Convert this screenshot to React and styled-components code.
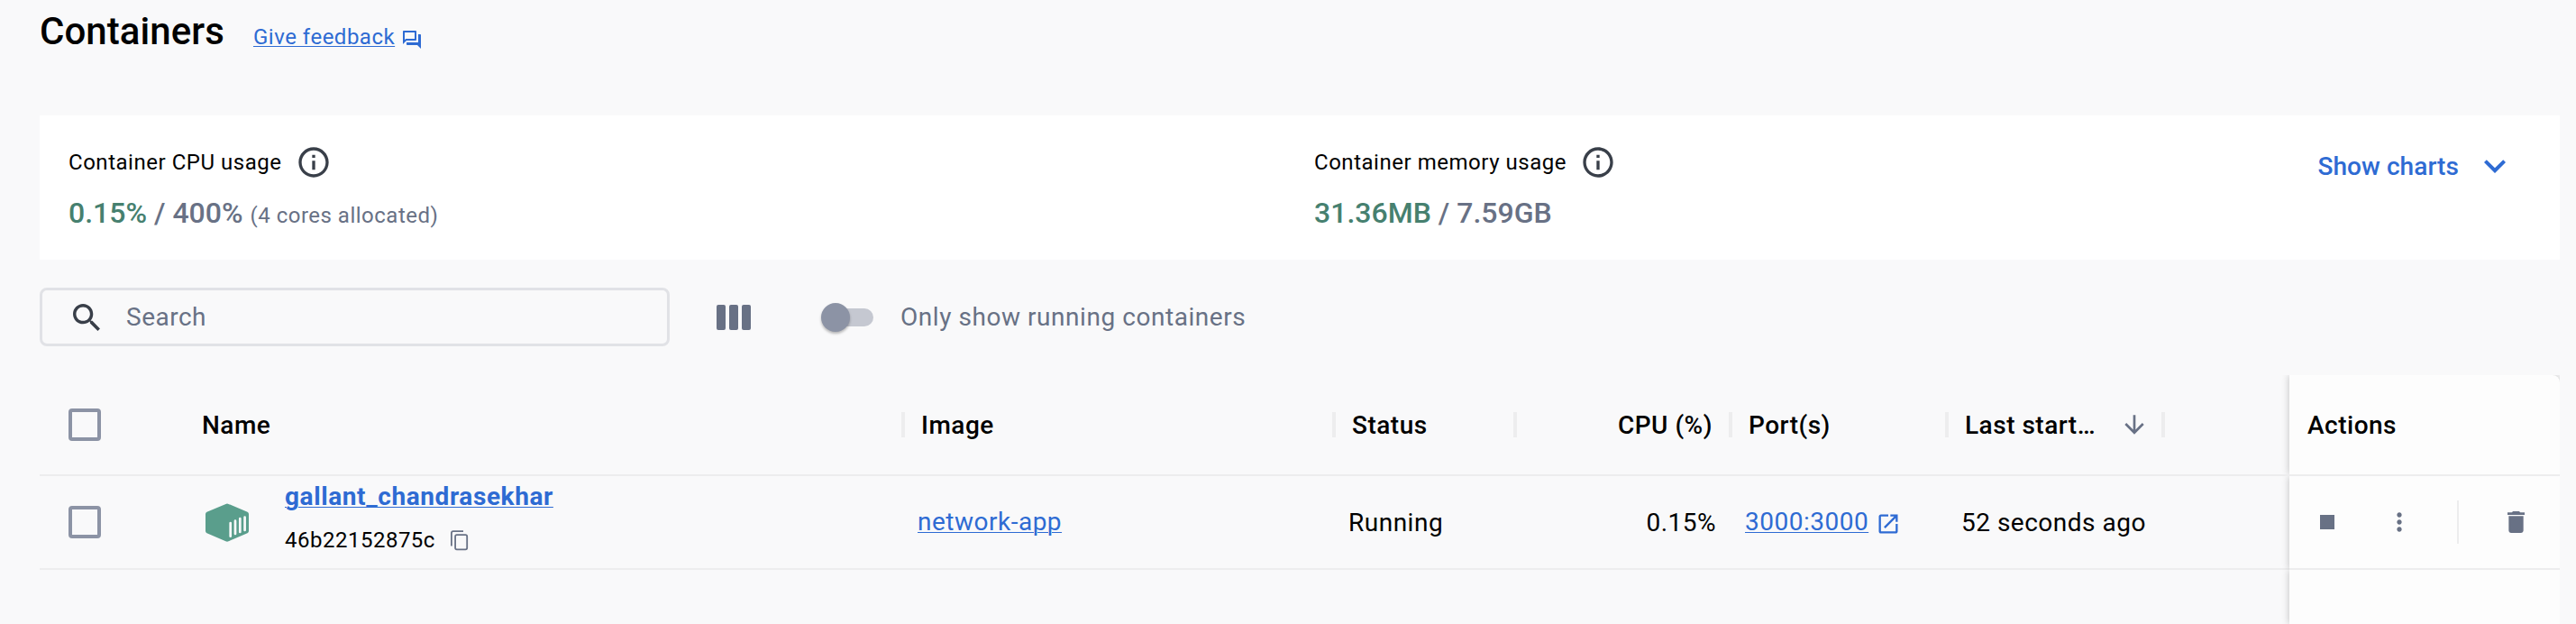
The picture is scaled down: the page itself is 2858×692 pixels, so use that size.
import React from "react";
import styled, { createGlobalStyle } from "styled-components";

const Global = createGlobalStyle`
  * { box-sizing: border-box; }
  html, body { margin: 0; padding: 0; background: #f9f9fa; }
  body { font-family: Roboto, "Liberation Sans", sans-serif; color: #000; overflow: hidden; }
`;

const blue = "#2e6bd3";
const slate = "#687185";
const rule = "#ededee";

const Page = styled.main`
  width: 2858px;
  height: 692px;
  padding: 0 18px 0 44px;
  display: flex;
  flex-direction: column;
  background: #f9f9fa;
  overflow: hidden;
`;
const Header = styled.header`
  height: 128px;
  flex: none;
  display: flex;
  align-items: baseline;
  padding-top: 11px;
`;
const Title = styled.h1`
  margin: 0;
  font-size: 42px;
  line-height: 48px;
  font-weight: 500;
  width: 237px;
  letter-spacing: 0.05px;
`;
const Link = styled.a`
  color: ${blue};
  font-size: ${(p) => p.$size || 28}px;
  font-weight: ${(p) => p.$weight || 400};
  letter-spacing: ${(p) => p.$ls ?? 0.5}px;
  line-height: 34px;
  text-decoration: underline;
  text-decoration-thickness: 1px;
  text-underline-offset: 2px;
  white-space: nowrap;
`;
const Icon = styled.svg`
  display: block;
  flex: none;
  width: ${(p) => p.$w}px;
  height: ${(p) => p.$h || p.$w}px;
  fill: ${(p) => p.$color || slate};
  margin-left: ${(p) => p.$ml || 0}px;
  margin-top: ${(p) => p.$mt || 0}px;
`;
const FeedbackIcon = styled(Icon)`
  align-self: flex-start;
`;
const CopyIcon = styled(Icon)`
  fill: none;
  stroke: ${slate};
  stroke-width: 1.8;
`;
const Panel = styled.section`
  height: 160px;
  flex: none;
  display: grid;
  grid-template-columns: 1382px 1fr auto;
  padding: 32px 48px 0 32px;
  background: #fff;
`;
const Stat = styled.div`
  display: flex;
  flex-direction: column;
`;
const StatLabel = styled.div`
  display: flex;
  align-items: center;
  gap: 17px;
  height: 40px;
  font-size: 24px;
  letter-spacing: 0.53px;
`;
const StatValue = styled.div`
  margin-top: 17px;
  font-size: 32px;
  line-height: 38px;
  font-weight: 500;
  color: ${slate};
  white-space: pre;
`;
const Used = styled.span`
  color: #46806f;
`;
const Note = styled.span`
  font-size: 24px;
  font-weight: 400;
  letter-spacing: 0.5px;
`;
const ChartsButton = styled.button`
  display: flex;
  align-items: center;
  height: 48px;
  padding: 0;
  border: 0;
  background: none;
  font: 500 28px Roboto, sans-serif;
  letter-spacing: 0.08px;
  color: ${blue};
`;
const Toolbar = styled.div`
  height: 128px;
  flex: none;
  padding-top: 31px;
  display: flex;
  align-items: flex-start;
`;
const SearchBox = styled.label`
  width: 699px;
  height: 65px;
  border: 3px solid #e1e2e6;
  border-radius: 8px;
  display: flex;
  align-items: center;
  padding-left: 34px;
`;
const SearchInput = styled.input`
  border: 0;
  outline: 0;
  padding: 0;
  margin-left: 29px;
  background: none;
  font: 28px Roboto, sans-serif;
  letter-spacing: 0.5px;
  height: 40px;
  &::placeholder { color: ${slate}; opacity: 1; }
`;
const Columns = styled.button`
  display: flex;
  gap: 4px;
  padding: 0;
  border: 0;
  background: none;
  margin: 19px 0 0 52px;
`;
const Bar = styled.span`
  width: 10px;
  height: 28px;
  border-radius: 2px;
  background: ${slate};
`;
const Switch = styled.span`
  width: 56px;
  height: 20px;
  margin: 23px 0 0 80px;
  border-radius: 10px;
  background: #c5c8d1;
  display: flex;
  align-items: center;
`;
const Thumb = styled.span`
  width: 32px;
  height: 32px;
  flex: none;
  margin-left: -2px;
  border-radius: 50%;
  background: #8c93a5;
  box-shadow: 0 2px 3px rgba(0, 0, 0, 0.28);
`;
const SwitchLabel = styled.span`
  margin: 16px 0 0 30px;
  font-size: 28px;
  line-height: 34px;
  letter-spacing: 0.55px;
  color: ${slate};
`;
const Table = styled.div`
  height: 276px;
  display: grid;
  grid-template-columns: 2496px 300px;
`;
const Main = styled.div`
  display: flex;
  flex-direction: column;
`;
const Pinned = styled.div`
  display: flex;
  flex-direction: column;
`;
const gridCols = "180px 776px 478px 200px 240px 240px 240px 1fr";
const HeadRow = styled.div`
  height: 112px;
  border-bottom: 2px solid ${rule};
  display: grid;
  grid-template-columns: ${gridCols};
  padding-bottom: 25px;
  align-items: end;
`;
const HeadCell = styled.div`
  height: 60px;
  display: flex;
  align-items: center;
  justify-content: ${(p) => (p.$right ? "flex-end" : "flex-start")};
  padding-left: ${(p) => p.$pl || 0}px;
  padding-right: ${(p) => p.$pr || 0}px;
  font-size: 28px;
  font-weight: 500;
  letter-spacing: 0.5px;
  white-space: nowrap;
`;
const Divider = styled.i`
  width: 4px;
  height: 28px;
  margin-right: ${(p) => p.$mr ?? 18}px;
  background: ${rule};
`;
const Row = styled.div`
  height: 104px;
  border-bottom: 2px solid ${rule};
  display: grid;
  grid-template-columns: ${gridCols};
`;
const Cell = styled.div`
  display: flex;
  align-items: center;
  justify-content: ${(p) => (p.$right ? "flex-end" : "flex-start")};
  padding-left: ${(p) => p.$pl || 0}px;
  padding-right: ${(p) => p.$pr || 0}px;
  font-size: 28px;
  letter-spacing: 0.5px;
  white-space: nowrap;
`;
const Checkbox = styled.span`
  width: 36px;
  height: 36px;
  border: 4px solid #8c93a5;
  border-radius: 4px;
`;
const NameBlock = styled.div`
  display: flex;
  flex-direction: column;
  align-self: flex-start;
  margin-left: 40px;
  padding-top: 6px;
`;
const IdLine = styled.div`
  display: flex;
  align-items: center;
  height: 28px;
  margin-top: 17px;
  font-size: 24px;
  letter-spacing: 0.5px;
`;
const PinnedCell = styled.div`
  background: #fdfdfd;
  box-shadow: 0 0 8px rgba(0, 0, 0, 0.24);
  clip-path: inset(0 0 0 -12px);
`;
const PinnedHead = styled(PinnedCell)`
  height: 110px;
  padding: 39px 0 0 20px;
  border-top-right-radius: 8px;
  font-size: 28px;
  line-height: 34px;
  font-weight: 500;
  letter-spacing: 0.5px;
`;
const PinnedRule = styled.div`
  height: 2px;
  background: ${rule};
`;
const PinnedRow = styled(PinnedCell)`
  height: 104px;
  padding-left: 34px;
  display: flex;
  align-items: center;
  border-bottom: 2px solid ${rule};
`;
const PinnedRest = styled(PinnedCell)`
  flex: 1;
`;
const Stop = styled.span`
  width: 16px;
  height: 16px;
  background: ${slate};
`;
const ActionRule = styled.span`
  width: 2px;
  height: 48px;
  margin: 0 54px 0 48px;
  background: ${rule};
`;

const Info = () => (
  <Icon $w={40} viewBox="0 0 24 24" $color="#393f49" $ml={-2}>
    <path d="M11 7h2v2h-2zm0 4h2v6h-2zm1-9C6.48 2 2 6.48 2 12s4.48 10 10 10 10-4.48 10-10S17.52 2 12 2zm0 18c-4.41 0-8-3.59-8-8s3.59-8 8-8 8 3.59 8 8-3.59 8-8 8z" />
  </Icon>
);

export default function App() {
  return (
    <>
      <Global />
      <Page>
        <Header>
          <Title>Containers</Title>
          <Link $size={24}>Give feedback</Link>
          <FeedbackIcon $w={24} viewBox="0 0 24 24" $color={blue} $ml={7} $mt={21}>
            <path d="M15 4v7H5.17L4 12.17V4h11m1-2H3c-.55 0-1 .45-1 1v14l4-4h10c.55 0 1-.45 1-1V3c0-.55-.45-1-1-1zm5 4h-2v9H6v2c0 .55.45 1 1 1h11l4 4V7c0-.55-.45-1-1-1z" />
          </FeedbackIcon>
        </Header>

        <Panel>
          <Stat>
            <StatLabel>Container CPU usage <Info /></StatLabel>
            <StatValue>
              <Used>0.15%</Used> / 400% <Note>(4 cores allocated)</Note>
            </StatValue>
          </Stat>
          <Stat>
            <StatLabel>Container memory usage <Info /></StatLabel>
            <StatValue><Used>31.36MB</Used> / 7.59GB</StatValue>
          </Stat>
          <ChartsButton>
            Show charts
            <Icon $w={48} viewBox="0 0 24 24" $color={blue} $ml={16}>
              <path d="M7.41 8.59 12 13.17l4.59-4.58L18 10l-6 6-6-6 1.41-1.41z" />
            </Icon>
          </ChartsButton>
        </Panel>

        <Toolbar>
          <SearchBox>
            <Icon $w={30} viewBox="3 3 17.5 17.5" $color="#393f49">
              <path d="M15.5 14h-.79l-.28-.27C15.41 12.59 16 11.11 16 9.5 16 5.91 13.09 3 9.5 3S3 5.91 3 9.5 5.91 16 9.5 16c1.61 0 3.09-.59 4.23-1.57l.27.28v.79l5 4.99L20.49 19l-4.99-5zm-6 0C7.01 14 5 11.99 5 9.5S7.01 5 9.5 5 14 7.01 14 9.5 11.99 14 9.5 14z" />
            </Icon>
            <SearchInput placeholder="Search" />
          </SearchBox>
          <Columns><Bar /><Bar /><Bar /></Columns>
          <Switch><Thumb /></Switch>
          <SwitchLabel>Only show running containers</SwitchLabel>
        </Toolbar>

        <Table>
          <Main>
            <HeadRow>
              <HeadCell $pl={32}><Checkbox /></HeadCell>
              <HeadCell>Name</HeadCell>
              <HeadCell><Divider />Image</HeadCell>
              <HeadCell><Divider />Status</HeadCell>
              <HeadCell $right $pr={18}><Divider $mr={112} />CPU (%)</HeadCell>
              <HeadCell><Divider />Port(s)</HeadCell>
              <HeadCell>
                <Divider />Last start…
                <Icon $w={32} viewBox="0 0 24 24" $ml={27}>
                  <path d="m20 12-1.41-1.41L13 16.17V4h-2v12.17l-5.58-5.59L4 12l8 8 8-8z" />
                </Icon>
              </HeadCell>
              <HeadCell><Divider /></HeadCell>
            </HeadRow>
            <Row>
              <Cell $pl={32}><Checkbox /></Cell>
              <Cell $pl={4}>
                <Icon $w={48} $h={43} viewBox="0 0 48 43" $color="#5a9e8c">
                  <path d="M22.500 .9Q24 .2 25.500 .9L46.500 9.800Q48 10.500 48 12V31Q48 32.500 46.500 33.200L25.500 42.300Q24 43 22.500 42.300L1.500 33.200Q0 32.500 0 31V12Q0 10.500 1.500 9.800Z" />
                  <path d="M27.700 22v14.700M33 19.700v14.300M38.300 17.200v14.800M43.600 15.700v14.300" stroke="#f9f9fa" strokeWidth="2.700" strokeLinecap="round" />
                </Icon>
                <NameBlock>
                  <Link $weight={700} $ls={0.6}>gallant_chandrasekhar</Link>
                  <IdLine>
                    46b22152875c
                    <CopyIcon $w={24} viewBox="0 0 24 24" $ml={15}>
                      <path d="M16 2.200H4.900Q2.900 2.200 2.900 4.200V18.500" />
                      <rect x="7.100" y="6.200" width="13.100" height="16.200" rx="1.800" />
                    </CopyIcon>
                  </IdLine>
                </NameBlock>
              </Cell>
              <Cell $pl={18}><Link>network-app</Link></Cell>
              <Cell $pl={18}>Running</Cell>
              <Cell $right $pr={14}>0.15%</Cell>
              <Cell $pl={18}>
                <Link>3000:3000</Link>
                <Icon $w={28} viewBox="0 0 24 24" $color={blue} $ml={8} $mt={3}>
                  <path d="M19 19H5V5h7V3H5c-1.110 0-2 .9-2 2v14c0 1.100.89 2 2 2h14c1.100 0 2-.9 2-2v-7h-2v7zM14 3v2h3.590l-9.830 9.830 1.410 1.410L19 6.410V10h2V3h-7z" />
                </Icon>
              </Cell>
              <Cell $pl={18}>52 seconds ago</Cell>
            </Row>
          </Main>
          <Pinned>
            <PinnedHead>Actions</PinnedHead>
            <PinnedRule />
            <PinnedRow>
              <Stop />
              <Icon $w={32} viewBox="0 0 24 24" $ml={56}>
                <path d="M12 8c1.100 0 2-.9 2-2s-.9-2-2-2-2 .9-2 2 .9 2 2 2zm0 2c-1.100 0-2 .9-2 2s.9 2 2 2 2-.9 2-2-.9-2-2-2zm0 6c-1.100 0-2 .9-2 2s.9 2 2 2 2-.9 2-2-.9-2-2-2z" />
              </Icon>
              <ActionRule />
              <Icon $w={19} $h={24} viewBox="5 3 14 18" preserveAspectRatio="none">
                <path d="M6 19c0 1.100.9 2 2 2h8c1.100 0 2-.9 2-2V7H6v12zM19 4h-3.500l-1-1h-5l-1 1H5v2h14V4z" />
              </Icon>
            </PinnedRow>
            <PinnedRest />
          </Pinned>
        </Table>
      </Page>
    </>
  );
}
